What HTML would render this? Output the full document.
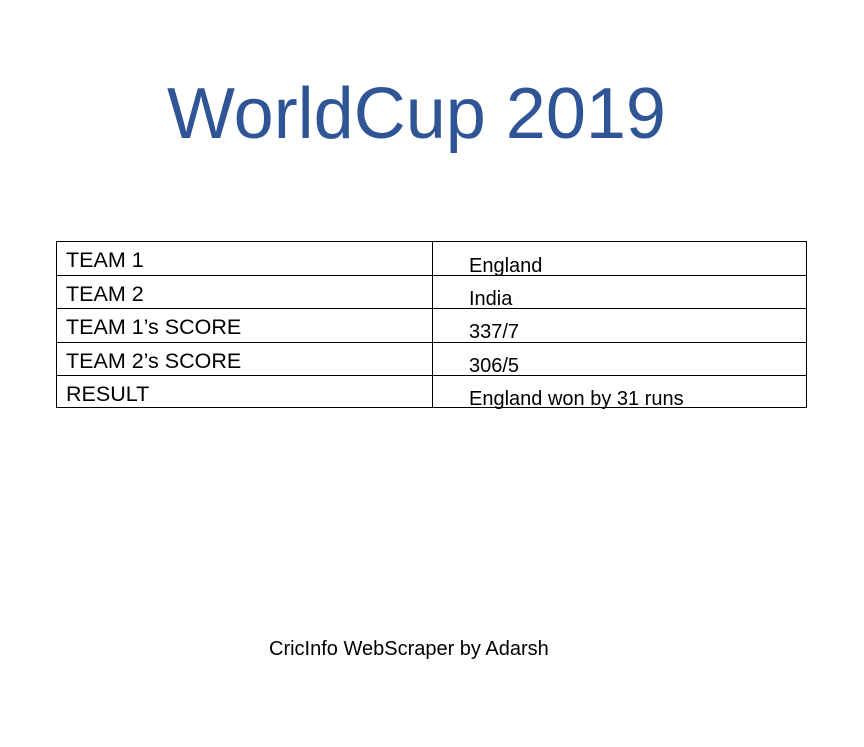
<!DOCTYPE html>
<html><head><style>
body{margin:0;width:864px;height:747px;background:#fff;position:relative;font-family:"Liberation Sans",Arial,sans-serif;overflow:hidden}
.t{position:absolute;left:167px;top:69px;font-size:72px;color:#2F5597;line-height:90px;white-space:nowrap;-webkit-text-stroke:0}
.tb{position:absolute;left:56px;top:241px;width:751px;height:167px;border:1px solid #000;box-sizing:border-box}
.r{position:absolute;left:0;width:100%;border-top:1px solid #000}
.c{position:absolute;left:375px;top:0;height:100%;border-left:1px solid #000}
.l{position:absolute;left:9px;font-size:21.5px;color:#000;white-space:nowrap}
.v{position:absolute;left:412px;font-size:20px;color:#000;white-space:nowrap}
.f{position:absolute;left:269px;top:638px;font-size:20px;white-space:nowrap}
</style></head><body>
<div class="t">WorldCup 2019</div>
<div class="tb">
<div class="r" style="top:33px"></div><div class="r" style="top:66px"></div><div class="r" style="top:100px"></div><div class="r" style="top:133px"></div>
<div class="c"></div>
<div class="l" style="top:6px">TEAM 1</div>
<div class="l" style="top:40px">TEAM 2</div>
<div class="l" style="top:73px">TEAM 1’s SCORE</div>
<div class="l" style="top:107px">TEAM 2’s SCORE</div>
<div class="l" style="top:140px">RESULT</div>
<div class="v" style="top:13px">England</div>
<div class="v" style="top:46px">India</div>
<div class="v" style="top:79px">337/7</div>
<div class="v" style="top:113px">306/5</div>
<div class="v" style="top:146px">England won by 31 runs</div>
</div>
<div class="f">CricInfo WebScraper by Adarsh</div>
</body></html>
